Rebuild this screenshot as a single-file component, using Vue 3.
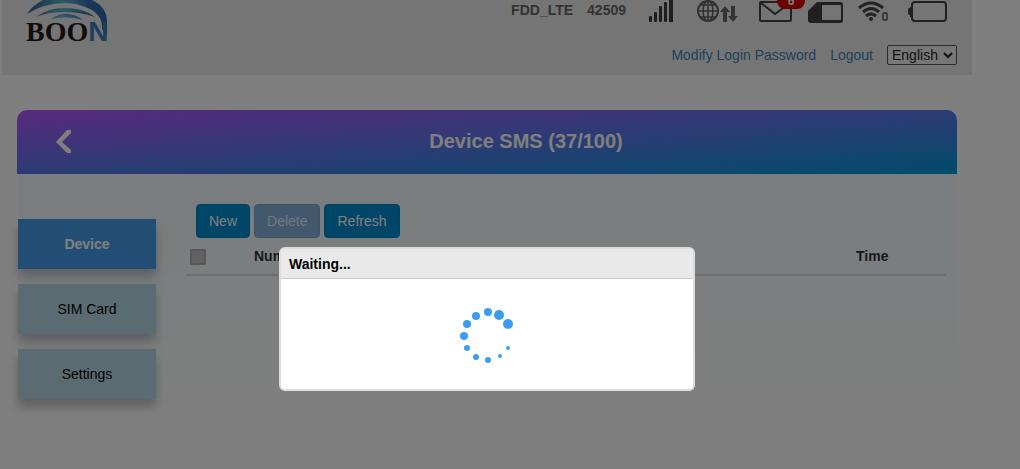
<script setup>
import { ref } from 'vue'

const language = ref('English')
const menu = ['Device', 'SIM Card', 'Settings']
const bars = [
  { x: 0, y: 16 },
  { x: 5, y: 12 },
  { x: 10, y: 6 },
  { x: 15, y: 2 },
  { x: 20, y: 0 }
]
const dots = [
  [48, 17, 5], [39, 8, 5], [28, 5, 4], [16, 9, 4], [7, 17, 4], [4, 29, 4],
  [7, 41, 3], [16, 50, 3], [28, 53, 3], [40, 49, 2], [48, 41, 2]
]
</script>

<template>
  <div class="page">
    <header class="top">
      <div class="logo">
        <svg class="arcs" viewBox="0 0 82 42" width="82" height="42" aria-hidden="true">
          <defs>
            <linearGradient id="arc" gradientUnits="userSpaceOnUse" x1="0" x2="82" y1="0" y2="0">
              <stop offset="0" stop-color="#2a5a94" />
              <stop offset="0.45" stop-color="#5cb4cc" />
              <stop offset="0.75" stop-color="#3274b4" />
              <stop offset="1" stop-color="#2a62a4" />
            </linearGradient>
          </defs>
          <path fill="url(#arc)" d="M1 14Q8 4 17 0H66Q81 7 81 22V34L76 29Q77 16 64 9Q52 3 40 3Q18 3 1 14Z" />
          <path fill="url(#arc)" d="M10 17Q22 8 38 8Q58 8 69 17Q54 12 38 12Q22 12 10 17Z" />
          <path fill="url(#arc)" d="M25 19Q41 8 57 20Q41 15 25 19Z" />
        </svg>
        <span class="brand">BOO<b>N</b></span>
      </div>
      <div class="right">
        <div class="status">
          <span class="net">FDD_LTE</span>
          <span class="plmn">42509</span>
          <svg class="signal" width="24" height="22" viewBox="0 0 24 22" fill="#3c3c3c" aria-hidden="true">
            <rect v-for="b in bars" :key="b.x" :x="b.x" :y="b.y" width="3" :height="22 - b.y" rx="1" />
            <rect x="20" y="0" width="4" height="22" />
          </svg>
          <svg class="globe" width="42" height="24" viewBox="0 0 42 24" aria-hidden="true">
            <g fill="none" stroke="#606060" stroke-width="1.5">
              <circle cx="11" cy="11" r="10" stroke-width="2" />
              <ellipse cx="11" cy="11" rx="5" ry="10" />
              <path d="M11 1V21M1 11H21M3 5H19M3 17H19" />
            </g>
            <path fill="#686868" d="M28 6L33 12H30V22H26V12H23ZM36 22L31 16H34V6H38V16H41Z" />
          </svg>
          <span class="mail">
            <svg width="34" height="23" viewBox="0 0 34 23" fill="none" stroke="#444" stroke-width="2" aria-hidden="true">
              <rect x="1" y="2" width="31" height="19" rx="1" />
              <path d="M2 3L16 14L31 3" />
            </svg>
            <span class="badge">6</span>
          </span>
          <svg class="sim" width="36" height="24" viewBox="0 0 36 24" aria-hidden="true">
            <path fill="#404040" d="M9 2H32Q35 2 35 5V20Q35 23 32 23H3Q0 23 0 20V11Z" />
            <rect x="14" y="5" width="19" height="15" rx="1" fill="#eaeaea" />
          </svg>
          <svg class="wifi" width="30" height="23" viewBox="0 0 30 23" fill="none" stroke="#444" aria-hidden="true">
            <path stroke-width="3" d="M1 8Q13 -2 25 8M5 12Q13 5 21 12M8 16Q13 12 18 16" />
            <circle cx="13" cy="19" r="2" fill="#444" stroke="none" />
            <rect x="25" y="13" width="4" height="7" rx="1" stroke="#555" stroke-width="1.5" />
          </svg>
          <svg class="battery" width="40" height="23" viewBox="0 0 40 23" aria-hidden="true">
            <rect x="4" y="2" width="34" height="19" rx="3" fill="none" stroke="#404040" stroke-width="2" />
            <path fill="#404040" d="M5 7H2V8H1Q0 8 0 12Q0 15 1 15H2V17H5Z" />
          </svg>
        </div>
        <nav class="account">
          <a href="#">Modify Login Password</a>
          <a href="#">Logout</a>
          <select v-model="language" aria-label="Language">
            <option>English</option>
          </select>
        </nav>
      </div>
    </header>

    <main class="card">
      <div class="title">
        <button class="back" type="button" aria-label="Back">
          <svg width="16" height="24" viewBox="0 0 16 24" aria-hidden="true">
            <path fill="#fff" d="M11 0H15V3L6 12L15 20V23H11L0 12Z" />
          </svg>
        </button>
        <h1>Device SMS (37/100)</h1>
      </div>
      <div class="panel">
        <nav class="side">
          <button v-for="(m, i) in menu" :key="m" type="button" :class="{ active: i === 0 }">{{ m }}</button>
        </nav>
        <section class="content">
          <div class="tools">
            <button type="button">New</button>
            <button type="button" disabled>Delete</button>
            <button type="button">Refresh</button>
          </div>
          <table>
            <thead>
              <tr>
                <th class="pick"><input type="checkbox" aria-label="Select all messages" /></th>
                <th class="number">Number</th>
                <th></th>
                <th class="time">Time</th>
              </tr>
            </thead>
          </table>
        </section>
      </div>
    </main>

    <div class="overlay">
      <div class="modal" role="dialog" aria-labelledby="wait">
        <h2 id="wait">Waiting...</h2>
        <div class="body">
          <svg width="54" height="58" viewBox="0 0 54 58" fill="#3c9cf0" aria-hidden="true">
            <circle v-for="(d, i) in dots" :key="i" :cx="d[0]" :cy="d[1]" :r="d[2]" />
          </svg>
        </div>
      </div>
    </div>
  </div>
</template>

<style>
body {
  margin: 0;
  background: #fff;
}
</style>

<style scoped>
* {
  box-sizing: border-box;
}
.page {
  min-height: 100vh;
  padding: 0 48px 0 2px;
  overflow: hidden;
  position: relative;
  font: 14px/20px "Liberation Sans", Arial, sans-serif;
  color: #333;
}
button,
select {
  font: inherit;
}
.top {
  display: flex;
  justify-content: space-between;
  height: 75px;
  padding: 0 15px 0 24px;
  background: #ebebeb;
}
.logo {
  position: relative;
  height: 44px;
}
.arcs {
  display: block;
}
.brand {
  position: absolute;
  left: 0;
  top: 16px;
  font: bold 28px/32px "Liberation Serif", serif;
  color: #231815;
}
.brand b {
  font-family: "Liberation Sans", sans-serif;
  color: #3c7cb8;
}
.right {
  display: flex;
  flex-direction: column;
  align-items: flex-end;
}
.status {
  display: flex;
  height: 24px;
  margin-right: 9px;
  font-weight: bold;
  color: #666;
}
.plmn {
  margin: 0 23px 0 14px;
}
.globe {
  margin: 0 20px 0 24px;
}
.mail {
  position: relative;
  height: 24px;
}
.badge {
  position: absolute;
  left: 18px;
  top: -11px;
  width: 28px;
  height: 20px;
  border-radius: 8px;
  background: #d80000;
  color: #fff;
  font-size: 12px;
  line-height: 24px;
  text-align: center;
}
.sim {
  margin: 0 14px 0 15px;
}
.battery {
  margin-left: 20px;
}
.account {
  display: flex;
  align-items: center;
  gap: 14px;
  margin-top: 21px;
  height: 20px;
}
.account a {
  color: #4080b8;
  text-decoration: none;
}
.account select {
  height: 20px;
  width: 70px;
  padding: 0;
  background: #efefef;
  color: #222;
  border: 1px solid #555;
  border-radius: 2px;
}
.card {
  margin: 35px 15px 0;
}
.title {
  display: flex;
  align-items: center;
  height: 64px;
  border-radius: 10px 10px 0 0;
  background: linear-gradient(to bottom right, #b255fa, #0098d8);
}
.back {
  width: 78px;
  padding: 0 23px 0 39px;
  border: 0;
  background: none;
}
.back svg {
  display: block;
}
h1 {
  flex: 1;
  margin: 0;
  padding-bottom: 2px;
  font-size: 20px;
  line-height: 24px;
  text-align: center;
  color: #fff;
}
.panel {
  display: flex;
  gap: 30px;
  margin: 0 1px;
  padding: 30px 10px 15px 0;
  min-height: 240px;
  background: linear-gradient(#f2fbff, #fff);
}
.side {
  display: flex;
  flex-direction: column;
  gap: 15px;
  width: 138px;
  margin-top: 15px;
}
.side button {
  height: 50px;
  border: 0;
  background: #b4d6e4;
  color: #000;
  box-shadow: 0 8px 10px rgba(0, 0, 0, 0.25);
}
.side button.active {
  background: #449ceb;
  color: #fff;
  font-weight: bold;
}
.content {
  flex: 1;
}
.tools {
  display: flex;
  gap: 4px;
  padding-left: 10px;
}
.tools button {
  height: 34px;
  padding: 0 12px;
  border: 1px solid #0082c4;
  border-radius: 4px;
  background: #008cd2;
  color: #fff;
}
.tools button:disabled {
  border-color: #7ca8cc;
  background: #84b0d8;
  color: #e4eef6;
}
table {
  width: 100%;
  border-spacing: 0;
  table-layout: fixed;
}
th {
  height: 38px;
  padding: 0;
  border-bottom: 2px solid #ddd;
  text-align: left;
}
.pick {
  width: 68px;
  padding: 2px 4px 0;
}
.pick input {
  display: block;
  appearance: none;
  width: 16px;
  height: 16px;
  margin: 0;
  border: 2px solid #b0b0b0;
  border-radius: 1px;
  background: #c4c4c4;
}
.number {
  width: 240px;
}
.time {
  width: 90px;
}
.overlay {
  position: absolute;
  inset: 0;
  display: flex;
  justify-content: center;
  align-items: flex-start;
  padding: 247px 48px 0 2px;
  background: rgba(0, 0, 0, 0.5);
}
.modal {
  width: 416px;
  border: 2px solid #ddd;
  border-radius: 6px;
  background: #fff;
  overflow: hidden;
}
h2 {
  margin: 0;
  padding: 5px 8px 4px;
  border-bottom: 1px solid #ccc;
  background: #e9e9e9;
  font-size: 14px;
  line-height: 20px;
  color: #000;
}
.body {
  display: flex;
  justify-content: center;
  padding: 28px 0 24px;
}
.body svg {
  display: block;
}
</style>
